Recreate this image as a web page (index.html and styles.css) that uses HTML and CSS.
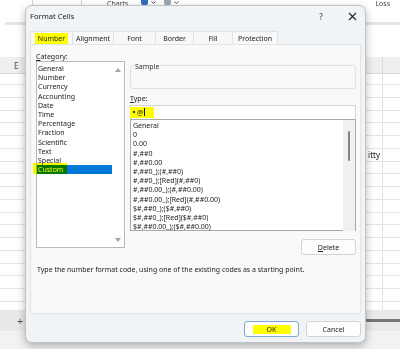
FILE: index.html
```html
<!DOCTYPE html>
<html lang="en">
<head>
    <meta charset="UTF-8">
    <meta name="viewport" content="width=device-width, initial-scale=1.0">
    <title>Format Cells</title>
    <link rel="stylesheet" href="styles.css">
</head>
<body>
    <div class="sheet">
        <div class="ribbon">
            <span class="rib-sep first"></span>
            <span class="rib-sep"></span>
            <span class="rib-label">Charts</span>
            <span class="rib-icon"></span>
            <svg class="rib-caret" width="5" height="3" viewBox="0 0 5 3"><path d="M0.5 0.5L2.5 2.5L4.5 0.5" stroke="#555" fill="none"/></svg>
            <span class="rib-icon grey"></span>
            <svg class="rib-caret" width="5" height="3" viewBox="0 0 5 3"><path d="M0.5 0.5L2.5 2.5L4.5 0.5" stroke="#555" fill="none"/></svg>
            <span class="rib-label loss">Loss</span>
        </div>
        <div class="ribbon-rule"></div>
        <div class="formula"></div>
        <div class="colhead">
            <span class="col-e">E</span>
            <span class="col-last"></span>
        </div>
        <div class="rows">
            <div class="row first"><span></span><span></span></div>
            <div class="row"><span></span><span></span></div>
            <div class="row"><span></span><span></span></div>
            <div class="row"><span></span><span></span></div>
            <div class="row"><span></span><span></span></div>
            <div class="row"><span></span><span></span></div>
            <div class="row"><span class="cell-text">itty</span><span></span></div>
            <div class="row"><span></span><span></span></div>
            <div class="row"><span></span><span></span></div>
            <div class="row"><span></span><span></span></div>
            <div class="row"><span></span><span></span></div>
            <div class="row"><span></span><span></span></div>
            <div class="row"><span></span><span></span></div>
            <div class="row"><span></span><span></span></div>
            <div class="row"><span></span><span></span></div>
            <div class="row"><span></span><span></span></div>
            <div class="row"><span></span><span></span></div>
            <div class="row"><span></span><span></span></div>
            <div class="row"><span></span><span></span></div>
        </div>
        <div class="tabbar">
            <span class="plus">+</span>
            <span class="hscroll"></span>
        </div>
        <div class="status"></div>
    </div>

    <div class="dialog">
        <div class="titlebar">
            <span class="title">Format Cells</span>
            <span class="tb-btn help">?</span>
            <span class="tb-btn">
                <svg width="9" height="9" viewBox="0 0 9 9"><path d="M1 1L8 8M8 1L1 8" stroke="#222" stroke-width="1.1" fill="none"/></svg>
            </span>
        </div>
        <div class="tabs">
            <span class="tab active"><span class="hl-tab">Number</span></span>
            <span class="tab">Alignment</span>
            <span class="tab">Font</span>
            <span class="tab">Border</span>
            <span class="tab">Fill</span>
            <span class="tab">Protection</span>
        </div>
        <div class="panel">
            <div class="cols">
                <div class="pane-left">
                    <div class="label"><u>C</u>ategory:</div>
                    <div class="listbox cat">
                        <ul class="items">
                            <li>General</li>
                            <li>Number</li>
                            <li>Currency</li>
                            <li>Accounting</li>
                            <li>Date</li>
                            <li>Time</li>
                            <li>Percentage</li>
                            <li>Fraction</li>
                            <li>Scientific</li>
                            <li>Text</li>
                            <li>Special</li>
                            <li class="selected">Custom</li>
                        </ul>
                        <div class="arrows">
                            <svg width="6" height="4" viewBox="0 0 6 4"><path d="M3 0L6 4H0Z" fill="#a6a6a6"/></svg>
                            <svg width="6" height="4" viewBox="0 0 6 4"><path d="M0 0H6L3 4Z" fill="#a6a6a6"/></svg>
                        </div>
                    </div>
                </div>
                <div class="pane-right">
                    <div class="sample"><span class="sample-label">Sample</span></div>
                    <div class="label type-label"><u>T</u>ype:</div>
                    <div class="type-input"><span class="hl-input"><span class="dot"></span>@<span class="caret"></span></span></div>
                    <div class="listbox types">
                        <ul class="items">
                            <li>General</li>
                            <li>0</li>
                            <li>0.00</li>
                            <li>#,##0</li>
                            <li>#,##0.00</li>
                            <li>#,##0_);(#,##0)</li>
                            <li>#,##0_);[Red](#,##0)</li>
                            <li>#,##0.00_);(#,##0.00)</li>
                            <li>#,##0.00_);[Red](#,##0.00)</li>
                            <li>$#,##0_);($#,##0)</li>
                            <li>$#,##0_);[Red]($#,##0)</li>
                            <li>$#,##0.00_);($#,##0.00)</li>
                        </ul>
                        <div class="vscroll"><span class="thumb"></span></div>
                    </div>
                    <div class="btn-row"><button class="btn"><u>D</u>elete</button></div>
                </div>
            </div>
            <p class="desc">Type the number format code, using one of the existing codes as a starting point.</p>
        </div>
        <div class="footer">
            <button class="btn btn-default"><span class="hl-ok">OK</span></button>
            <button class="btn">Cancel</button>
        </div>
    </div>
</body>
</html>
```

FILE: styles.css
```css
* {
    box-sizing: border-box;
}
body {
    margin: 0;
    width: 400px;
    height: 349px;
    overflow: hidden;
    position: relative;
    background: #fff;
    color: #1b1b1b;
    font-family: "Noto Sans", "Open Sans", sans-serif;
    font-size: 7px;
}

/* spreadsheet behind the dialog */
.sheet {
    display: flex;
    flex-direction: column;
    height: 349px;
}
.ribbon {
    height: 22px;
    display: flex;
    align-items: flex-start;
    overflow: hidden;
}
.rib-sep {
    width: 1px;
    height: 6px;
    background: #d4d4d4;
    margin-left: 48px;
}
.rib-sep.first {
    margin-left: 32px;
}
.rib-label {
    margin-left: 25px;
    font-size: 7px;
    line-height: 7px;
    color: #444;
}
.rib-label.loss {
    margin-left: auto;
    margin-right: 10px;
}
.rib-icon {
    width: 7px;
    height: 5px;
    margin-left: 13px;
    background: #2f6fc0;
    border-radius: 0 0 2px 2px;
}
.rib-icon.grey {
    background: #9aa7b5;
    margin-left: 8px;
}
.rib-caret {
    margin-left: 3px;
    margin-top: 1px;
}
.ribbon-rule {
    height: 3px;
    margin-left: 5px;
    background: #e4e4e4;
}
.formula {
    height: 32px;
}
.colhead {
    height: 17px;
    background: #efefef;
    border-bottom: 1px solid #d8d8d8;
    display: flex;
    align-items: center;
}
.col-e {
    margin-left: 14px;
    font-size: 8px;
    color: #444;
}
.col-last {
    margin-left: auto;
    width: 18px;
    height: 100%;
    border-left: 1px solid #dcdcdc;
}
.rows {
    flex: 1;
    min-height: 0;
    overflow: hidden;
}
.row {
    height: 12.75px;
    border-bottom: 1px solid #e3e3e3;
    display: grid;
    grid-template-columns: 1fr 18px;
}
.row.first {
    height: 11px;
}
.row span + span {
    border-left: 1px solid #e3e3e3;
}
.cell-text {
    font-size: 8px;
    line-height: 11px;
    text-align: right;
    padding-right: 2px;
    color: #222;
}
.tabbar {
    height: 21px;
    background: #e9e9e9;
    display: flex;
    align-items: center;
}
.plus {
    margin-left: 17px;
    font-size: 11px;
    color: #555;
}
.hscroll {
    margin-left: auto;
    width: 34px;
    height: 3px;
    background: #767676;
}
.status {
    height: 18px;
    background: #f2f2f2;
}

/* dialog */
.dialog {
    position: absolute;
    left: 25px;
    top: 5px;
    width: 341px;
    height: 338px;
    border: 1px solid #bfc3c7;
    border-radius: 7px;
    background: #f1f4f7;
    box-shadow: 0 3px 9px rgba(0, 0, 0, 0.28);
    display: flex;
    flex-direction: column;
}
.titlebar {
    height: 25px;
    display: flex;
    align-items: flex-start;
    padding: 4px 0 0 4px;
}
.title {
    flex: 1;
    font-size: 7.6px;
    line-height: 12px;
    color: #1b1b1b;
}
.tb-btn {
    width: 26px;
    height: 12px;
    display: flex;
    align-items: center;
    justify-content: center;
    font-size: 8px;
    color: #333;
}
.tb-btn.help {
    margin-right: 5px;
}
.tabs {
    display: grid;
    grid-template-columns: 42px 41px 42px 38px 39px 45px;
    height: 13px;
    margin-left: 4px;
}
.tab {
    display: flex;
    align-items: center;
    justify-content: center;
    border: 1px solid #e0e2e5;
    border-bottom: none;
    margin-right: -1px;
    background: #f6f8fa;
    color: #222;
}
.tab.active {
    background: #f9f9f9;
}
.hl-tab {
    background: #ffff00;
    padding: 1px 3px;
    line-height: 9px;
}
.panel {
    height: 270px;
    margin: 0 4px;
    background: #f9f9f9;
    border: 1px solid #e3e3e3;
    padding: 7px 4px 0 5px;
}
.cols {
    display: grid;
    grid-template-columns: 89px 226px;
    gap: 5px;
}
.label {
    line-height: 9px;
    color: #222;
}
.listbox {
    background: #fff;
    border: 1px solid #b9b9b9;
    display: grid;
    grid-template-columns: 1fr 12px;
}
.items {
    list-style: none;
    margin: 0;
    padding: 2px 0 0;
}
.items li {
    line-height: 9.2px;
    height: 9.2px;
    padding-left: 1px;
    white-space: nowrap;
}
.cat {
    height: 187px;
}
.cat .selected {
    position: relative;
    background: #0078d7;
    color: #fff;
}
.cat .selected::before {
    content: "";
    position: absolute;
    left: -4px;
    top: -2px;
    width: 34px;
    height: 11px;
    background: #ffff00;
    mix-blend-mode: multiply;
}
.arrows {
    display: flex;
    flex-direction: column;
    justify-content: space-between;
    align-items: center;
    padding: 6px 0 5px;
}
.sample {
    margin-top: 13px;
    height: 24px;
    border: 1px solid #e0e0e0;
    border-radius: 3px;
    padding-left: 3px;
    display: flex;
    align-items: flex-start;
}
.sample-label {
    margin-top: -3px;
    line-height: 8px;
    padding: 0 1px;
    background: #f9f9f9;
    color: #333;
}
.type-label {
    margin-top: 5px;
}
.type-input {
    margin-top: 2px;
    height: 14px;
    background: #fff;
    border: 1px solid #d4d4d4;
    border-bottom: none;
}
.hl-input {
    display: inline-flex;
    align-items: center;
    width: 24px;
    height: 11px;
    margin-left: -1px;
    margin-top: -1px;
    background: #ffff00;
    padding-left: 3px;
}
.dot {
    width: 2px;
    height: 2px;
    background: #333;
    margin-right: 2px;
}
.caret {
    width: 1px;
    height: 8px;
    background: #111;
    margin-left: 1px;
}
.types {
    height: 112px;
    border-color: #a9a9a9;
}
.types .items {
    padding: 1px 0 0 1px;
}
.vscroll {
    background: #f0f0f0;
    display: flex;
    justify-content: center;
    padding-top: 11px;
}
.thumb {
    width: 2px;
    height: 30px;
    border-radius: 1px;
    background: #858585;
}
.btn-row {
    display: flex;
    justify-content: flex-end;
    margin-top: 8px;
}
.btn {
    width: 55px;
    height: 16px;
    padding: 0;
    border: 1px solid #d3d3d3;
    border-radius: 3px;
    background: #fdfdfd;
    font-family: inherit;
    font-size: 7px;
    color: #1b1b1b;
    display: flex;
    align-items: center;
    justify-content: center;
}
.desc {
    margin: 10px 0 0 1px;
    line-height: 9px;
    color: #222;
}
.footer {
    display: flex;
    justify-content: flex-end;
    gap: 7px;
    padding: 7px 4px 0 0;
}
.btn-default {
    border-color: #7ea6d6;
}
.hl-ok {
    background: #ffff00;
    width: 38px;
    line-height: 9px;
    text-align: center;
}
```
